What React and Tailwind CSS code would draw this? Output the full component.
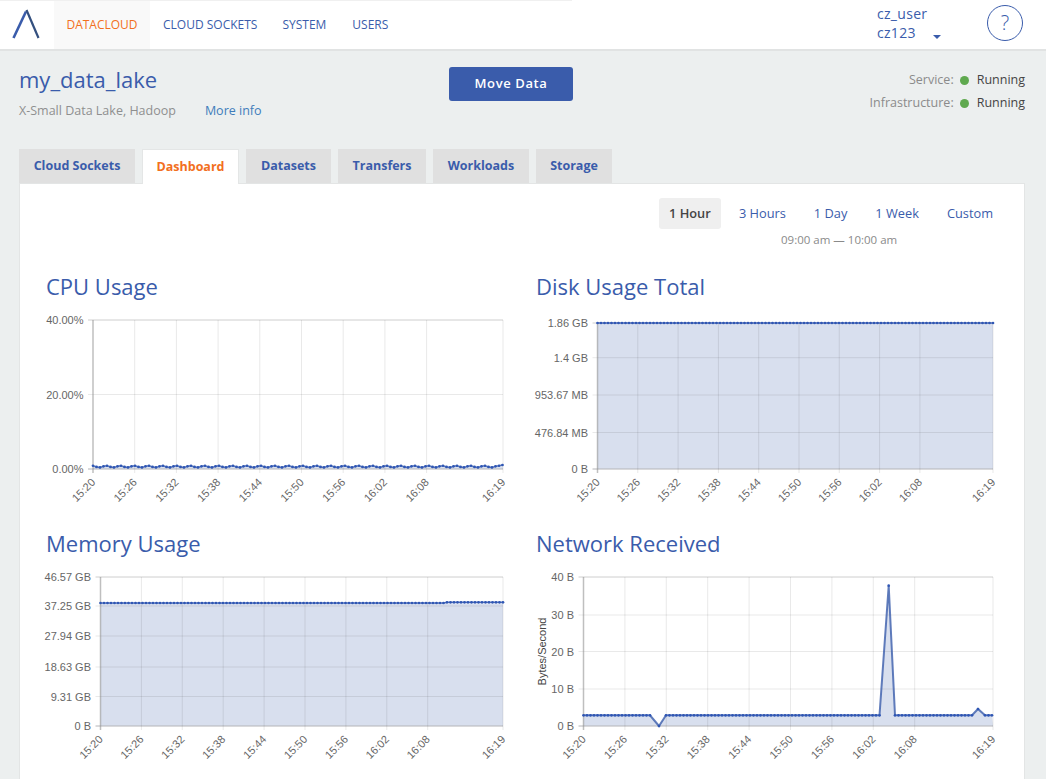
import React from 'react';

const BLUE = '#3a5cab';
const DOT = '#2f56b4';
const TIME_LABELS = ['15:20', '15:26', '15:32', '15:38', '15:44', '15:50', '15:56', '16:02', '16:08', '16:19'];

// Chart coordinates are the same as page coordinates, the viewBox crops the cell
const Chart = ({ viewBox, height, plot, yTicks, xTicks, line, points: givenPoints, yTitle, lineWidth = 1.6 }) => {
  const { left, right, top, bottom } = plot;
  let points = givenPoints;
  if (!points) {
    points = [];
    for (let x = left; x <= right + 0.01; x += 3.5) points.push([x, line(x)]);
  }
  const linePath = points.map(([x, y], i) => `${i ? 'L' : 'M'}${x.toFixed(1)} ${y.toFixed(1)}`).join(' ');
  const areaPath = `${linePath} L${right} ${bottom} L${left} ${bottom} Z`;

  return (
    <svg viewBox={viewBox} width="490" height={height} className="block">
      <path d={areaPath} fill="#d8dfee" />
      <line x1={left - 5} x2={right} y1={top} y2={top} stroke="#e4e4e4" />
      {yTicks.map(([label, y]) => (
        <g key={label}>
          <line x1={left - 5} x2={right} y1={y} y2={y} stroke={label.startsWith('0') ? '#b4b4b8' : '#2b2b2b'} strokeOpacity={label.startsWith('0') ? 1 : 0.1} />
          <text x={left - 9.5} y={y + 4} textAnchor="end" fontSize="11" fill="#666" fontFamily="'Liberation Sans', sans-serif">{label}</text>
        </g>
      ))}
      {xTicks.map((x, i) => (
        <g key={TIME_LABELS[i]}>
          <line x1={x} x2={x} y1={top} y2={bottom + 4} stroke={i === 0 ? '#8a8a8a' : '#2b2b2b'} strokeOpacity={i === 0 ? 0.55 : 0.1} strokeWidth={i === 0 ? 1.5 : 1} />
          <text
            x={x + 3}
            y={bottom + 14}
            transform={`rotate(-45 ${x + 3} ${bottom + 14})`}
            textAnchor="end"
            fontSize="11"
            fill="#666"
            fontFamily="'Liberation Sans', sans-serif"
          >
            {TIME_LABELS[i]}
          </text>
        </g>
      ))}
      {yTitle && (
        <text transform={`rotate(-90 ${left - 38} ${(top + bottom) / 2})`} x={left - 38} y={(top + bottom) / 2} textAnchor="middle" fontSize="11" fill="#444" fontFamily="'Liberation Sans', sans-serif">
          {yTitle}
        </text>
      )}
      <path d={linePath} fill="none" stroke={BLUE} strokeWidth={lineWidth} strokeOpacity="0.8" />
      {points.map(([x, y]) => (
        <circle key={x} cx={x} cy={y} r="1.35" fill={DOT} />
      ))}
    </svg>
  );
};

const ticks = (start, step, end) => {
  const list = [];
  for (let i = 0; i < 9; i++) list.push(start + step * i);
  list.push(end);
  return list;
};

// network curve: flat runs carry dots every 3.5px, the bumps only at their corners
const flat = (from, to) => {
  const run = [];
  for (let x = from; x <= to; x += 3.5) run.push([x, 715.3]);
  return run;
};
const networkPoints = [
  ...flat(583.5, 652),
  [659, 726],
  ...flat(666, 882),
  [888.7, 585.7],
  ...flat(895, 972.5),
  [978, 709],
  ...flat(985, 993),
];

const cpuLine = (x) => {
  if (x > 499) return 465;
  return 466.6 + 0.9 * Math.cos((2 * Math.PI * (x - 113.3)) / 14);
};

const ChartCell = ({ title, titleClass, children }) => (
  <div>
    <h2 className={`text-[22px] leading-[32px] h-[34px] text-[#3a5cab] ${titleClass}`}>{title}</h2>
    {children}
  </div>
);

const Status = ({ label }) => (
  <div className="flex items-center justify-end h-[23px] text-[12.5px]">
    <span className="text-[#8b8b8b]">{label}:</span>
    <span className="w-[9px] h-[9px] rounded-full bg-[#5fa94f] ml-[6px] mr-[8px]" />
    <span className="text-[#444]">Running</span>
  </div>
);

const tabs = [
  { name: 'Cloud Sockets', width: 'w-[116px]' },
  { name: 'Dashboard', width: 'w-[97px]', active: true },
  { name: 'Datasets', width: 'w-[85px]' },
  { name: 'Transfers', width: 'w-[88px]' },
  { name: 'Workloads', width: 'w-[96px]' },
  { name: 'Storage', width: 'w-[76px]' },
];

export default function App() {
  return (
    <div className="w-[1046px] h-[779px] overflow-hidden bg-[#ecefef]" style={{ fontFamily: "'Open Sans', sans-serif" }}>
      {/* Top nav */}
      <header className="h-[51px] bg-white border-b-2 border-[#e1e3e3] flex relative">
        <div className="absolute top-0 left-0 w-[572px] h-px bg-[#f0f0f0]" />
        <div className="w-[54px] flex items-center justify-center">
          <svg width="54" height="49" viewBox="0 0 54 49" fill="none">
            <path d="M13.5 38 L26 11.5" stroke="#3a5cab" strokeWidth="2.6" />
            <path d="M26.5 10 L38.5 38" stroke="#34507f" strokeWidth="2.2" />
          </svg>
        </div>
        <a className="w-[96px] bg-[#f9f9f9] flex items-center justify-center text-[12px] text-[#f26f21]">DATACLOUD</a>
        <nav className="flex items-center text-[12px] text-[#3a5cab]">
          <a className="ml-[13px]">CLOUD SOCKETS</a>
          <a className="ml-[25px]">SYSTEM</a>
          <a className="ml-[26px]">USERS</a>
        </nav>
        <div className="ml-auto flex">
          <div className="text-[14px] leading-[19px] text-[#3a5cab] pt-[4px] tracking-[0.3px] relative w-[110px]">
            <div>cz_user</div>
            <div>cz123</div>
            <span className="absolute left-[56px] top-[35px] border-x-[4px] border-x-transparent border-t-[4px] border-t-[#3a5cab]" />
          </div>
          <div className="mt-[5px] mr-[23px] w-[36px] h-[36px] rounded-full border border-[#3a5cab] flex items-center justify-center text-[20px] font-light text-[#3a5cab]">?</div>
        </div>
      </header>

      {/* Lake summary */}
      <section className="h-[98px] flex pl-[19px] pr-[21px]">
        <div className="w-[430px] pt-[10px]">
          <h1 className="text-[22px] leading-[36px] text-[#3a5cab]">my_data_lake</h1>
          <p className="text-[12.5px] leading-[20px] mt-[4px] text-[#8f8f8f]">
            X-Small Data Lake, Hadoop
            <a className="ml-[29px] text-[#3f7dbb]">More info</a>
          </p>
        </div>
        <button className="mt-[16px] w-[124px] h-[34px] rounded-[3px] bg-[#3a5cab] text-white text-[13px] font-semibold tracking-[0.6px]">Move Data</button>
        <div className="ml-auto pt-[18px]">
          <Status label="Service" />
          <Status label="Infrastructure" />
        </div>
      </section>

      {/* Tabs */}
      <div className="pl-[19px] flex gap-[7px] h-[34px] items-end">
        {tabs.map(tab => (
          <div
            key={tab.name}
            className={`${tab.width} flex items-center justify-center text-[12.5px] font-bold ${tab.active ? 'h-[35px] bg-white text-[#f26f21] border-x border-t border-[#e4e6e6] relative top-[1px] z-10' : 'h-[34px] bg-[#e0e0e0] text-[#3a5cab]'}`}
          >
            {tab.name}
          </div>
        ))}
      </div>

      {/* Dashboard panel */}
      <main className="ml-[19px] mr-[21px] h-[610px] bg-white border border-[#e3e5e5]">
        <div className="h-[86px] relative">
          <div className="absolute top-[14px] right-[31px] flex items-center text-[12.8px] text-[#3a5cab]">
            <span className="w-[62px] h-[31px] rounded-[3px] bg-[#efefef] flex items-center justify-center font-semibold text-[#444]">1 Hour</span>
            <span className="ml-[18px]">3 Hours</span>
            <span className="ml-[28px]">1 Day</span>
            <span className="ml-[28px]">1 Week</span>
            <span className="ml-[28px]">Custom</span>
          </div>
          <div className="absolute top-[47px] left-[761px] text-[11.5px] leading-[17px] text-[#8a8a8a]">09:00 am — 10:00 am</div>
        </div>

        <div className="grid grid-cols-[510px_490px]">
          <ChartCell title="CPU Usage" titleClass="pl-[26px]">
            <div className="h-[223px] pt-[6px]">
              <Chart
                viewBox="20 310 490 211"
                height={211}
                plot={{ left: 93, right: 503, top: 320, bottom: 469 }}
                yTicks={[['40.00%', 320], ['20.00%', 394.5], ['0.00%', 469]]}
                xTicks={ticks(93, 41.7, 503)}
                line={cpuLine}
              />
            </div>
          </ChartCell>
          <ChartCell title="Disk Usage Total" titleClass="pl-[6px]">
            <div className="h-[223px] pt-[6px]">
              <Chart
                viewBox="530 310 490 211"
                height={211}
                plot={{ left: 597.5, right: 993, top: 323, bottom: 469 }}
                yTicks={[['1.86 GB', 323], ['1.4 GB', 357.7], ['953.67 MB', 395], ['476.84 MB', 432.5], ['0 B', 469]]}
                xTicks={ticks(597.5, 40.3, 993)}
                line={() => 323}
              />
            </div>
          </ChartCell>
          <ChartCell title="Memory Usage" titleClass="pl-[26px]">
            <div className="pt-[6px]">
              <Chart
                viewBox="20 567 490 212"
                height={212}
                plot={{ left: 100.5, right: 503, top: 577, bottom: 726 }}
                yTicks={[['46.57 GB', 577], ['37.25 GB', 606], ['27.94 GB', 636], ['18.63 GB', 667], ['9.31 GB', 696.5], ['0 B', 726]]}
                xTicks={ticks(100.5, 40.9, 503)}
                line={x => (x > 445 ? 602.3 : 603)}
              />
            </div>
          </ChartCell>
          <ChartCell title="Network Received" titleClass="pl-[6px]">
            <div className="pt-[6px]">
              <Chart
                viewBox="530 567 490 212"
                height={212}
                plot={{ left: 583.5, right: 993, top: 577, bottom: 726 }}
                yTicks={[['40 B', 577], ['30 B', 615], ['20 B', 651.5], ['10 B', 689], ['0 B', 726]]}
                xTicks={ticks(583.5, 41.4, 993)}
                points={networkPoints}
                yTitle="Bytes/Second"
                lineWidth={2}
              />
            </div>
          </ChartCell>
        </div>
      </main>
    </div>
  );
}
